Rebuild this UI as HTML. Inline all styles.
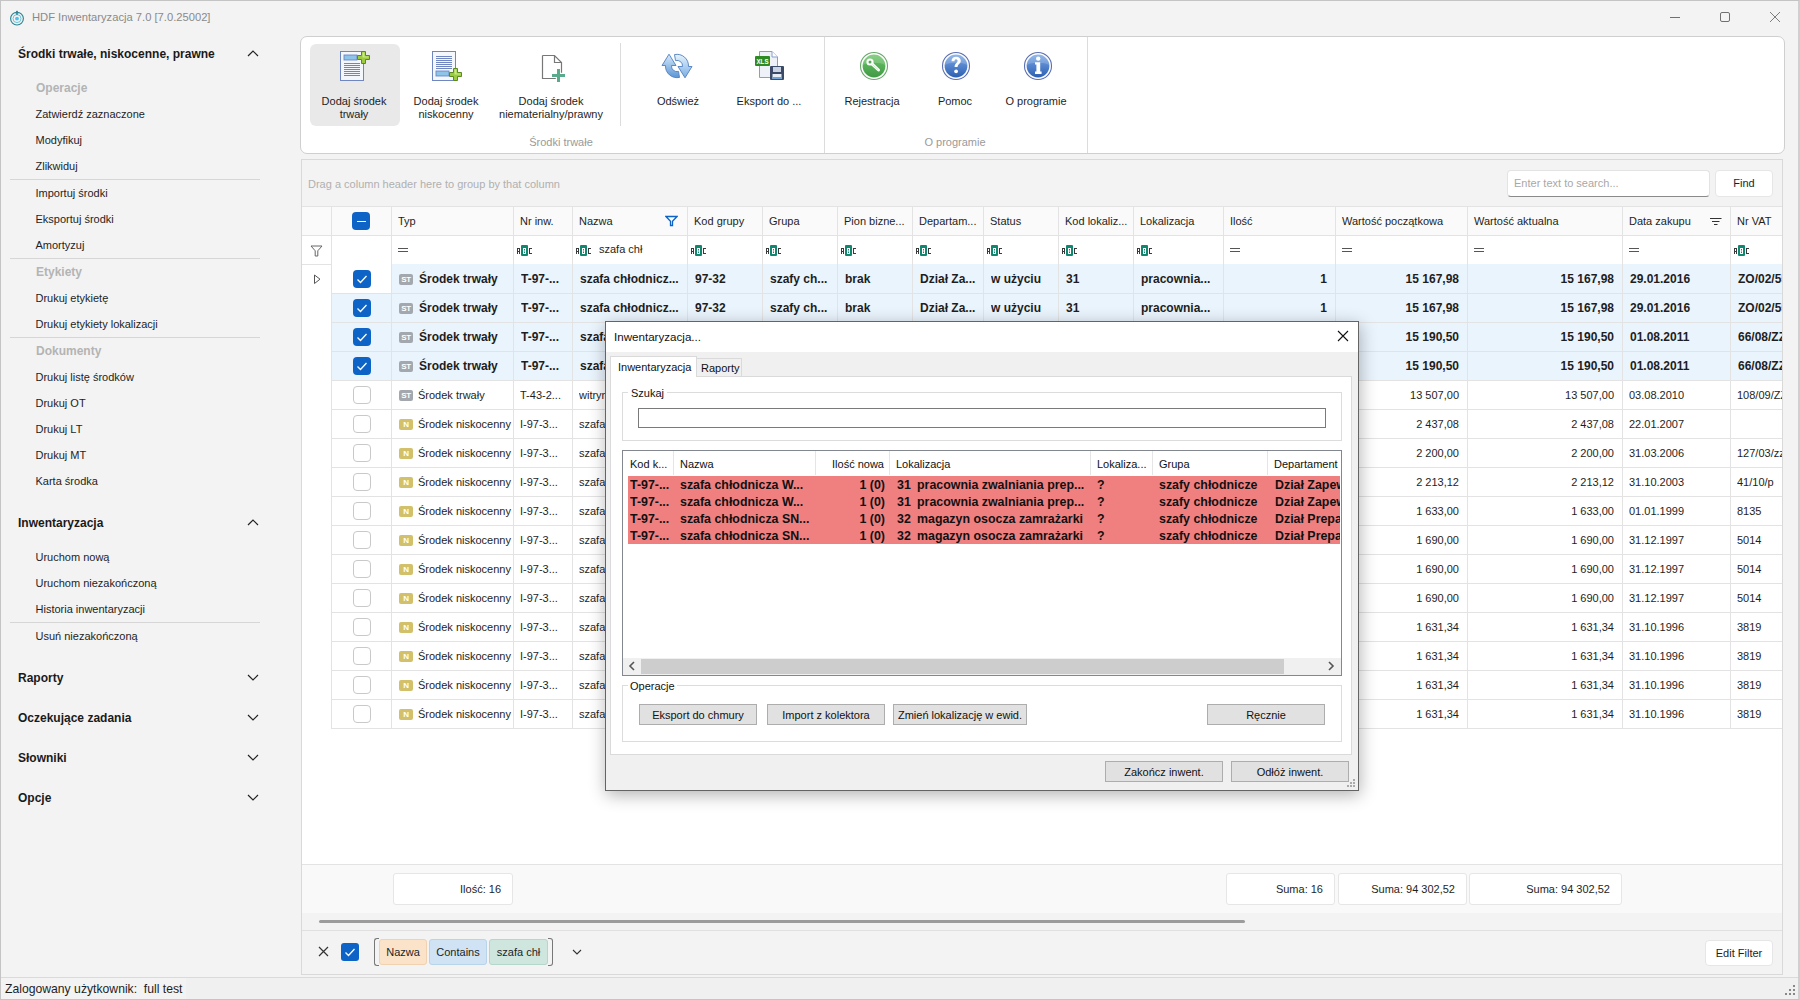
<!DOCTYPE html><html><head><meta charset='utf-8'><style>
*{box-sizing:border-box;margin:0;padding:0}
html,body{width:1800px;height:1000px;overflow:hidden;background:#f3f3f3;font-family:"Liberation Sans",sans-serif;font-size:11px;color:#1e1e1e}
.a{position:absolute}
.t{position:absolute;white-space:nowrap;line-height:14px}
.b{font-weight:bold;font-size:12px}
</style></head><body>
<div class='a' style='left:0;top:0;width:1800px;height:1000px;border:1px solid #c4c4c4;border-right:2px solid #cfcfcf'></div>
<svg class='a' style='left:9px;top:9px' width='16' height='17' viewBox='0 0 16 17'><circle cx='8' cy='9.6' r='6.4' fill='none' stroke='#2e8595' stroke-width='1.15'/><circle cx='8' cy='9.6' r='4' fill='none' stroke='#5fbfd8' stroke-width='0.9'/><circle cx='8' cy='9.6' r='1.9' fill='#4cc2ef'/><path d='M6.3 4.5L8 1.2L9.7 4.5Z' fill='#2e8595'/><rect x='7.3' y='2' width='1.4' height='4' fill='#2e8595'/></svg>
<div class='t' style='left:32px;top:10px;color:#8a8a8a;font-size:11.2px'>HDF Inwentaryzacja 7.0 [7.0.25002]</div>
<div class='a' style='left:1670px;top:17px;width:10px;height:1px;background:#707070'></div>
<div class='a' style='left:1720px;top:12px;width:10px;height:10px;border:1px solid #707070;border-radius:2px'></div>
<svg class='a' style='left:1769px;top:11px' width='12' height='12'><path d='M1 1L11 11M11 1L1 11' stroke='#707070' stroke-width='0.9'/></svg>
<div class='t b' style='left:18px;top:47px;color:#1a1a1a'>Środki trwałe, niskocenne, prawne</div>
<svg class='a' style='left:247px;top:50px' width='12' height='8'><path d='M1 6L6 1L11 6' fill='none' stroke='#222' stroke-width='1.2'/></svg>
<div class='t b' style='left:36px;top:81px;color:#b4b4b4'>Operacje</div>
<div class='t' style='left:35.5px;top:107px;color:#1e1e1e'>Zatwierdź zaznaczone</div>
<div class='t' style='left:35.5px;top:133px;color:#1e1e1e'>Modyfikuj</div>
<div class='t' style='left:35.5px;top:159px;color:#1e1e1e'>Zlikwiduj</div>
<div class='a' style='left:10px;top:179px;width:250px;height:1px;background:#d6d6d6'></div>
<div class='t' style='left:35.5px;top:186px;color:#1e1e1e'>Importuj środki</div>
<div class='t' style='left:35.5px;top:212px;color:#1e1e1e'>Eksportuj środki</div>
<div class='t' style='left:35.5px;top:238px;color:#1e1e1e'>Amortyzuj</div>
<div class='a' style='left:10px;top:258px;width:250px;height:1px;background:#d6d6d6'></div>
<div class='t b' style='left:36px;top:265px;color:#b4b4b4'>Etykiety</div>
<div class='t' style='left:35.5px;top:291px;color:#1e1e1e'>Drukuj etykietę</div>
<div class='t' style='left:35.5px;top:317px;color:#1e1e1e'>Drukuj etykiety lokalizacji</div>
<div class='a' style='left:10px;top:337px;width:250px;height:1px;background:#d6d6d6'></div>
<div class='t b' style='left:36px;top:344px;color:#b4b4b4'>Dokumenty</div>
<div class='t' style='left:35.5px;top:370px;color:#1e1e1e'>Drukuj listę środków</div>
<div class='t' style='left:35.5px;top:396px;color:#1e1e1e'>Drukuj OT</div>
<div class='t' style='left:35.5px;top:422px;color:#1e1e1e'>Drukuj LT</div>
<div class='t' style='left:35.5px;top:448px;color:#1e1e1e'>Drukuj MT</div>
<div class='t' style='left:35.5px;top:474px;color:#1e1e1e'>Karta środka</div>
<div class='t b' style='left:18px;top:516px;color:#1a1a1a'>Inwentaryzacja</div>
<svg class='a' style='left:247px;top:519px' width='12' height='8'><path d='M1 6L6 1L11 6' fill='none' stroke='#222' stroke-width='1.2'/></svg>
<div class='t' style='left:35.5px;top:550px;color:#1e1e1e'>Uruchom nową</div>
<div class='t' style='left:35.5px;top:576px;color:#1e1e1e'>Uruchom niezakończoną</div>
<div class='t' style='left:35.5px;top:602px;color:#1e1e1e'>Historia inwentaryzacji</div>
<div class='a' style='left:10px;top:622px;width:250px;height:1px;background:#d6d6d6'></div>
<div class='t' style='left:35.5px;top:629px;color:#1e1e1e'>Usuń niezakończoną</div>
<div class='t b' style='left:18px;top:671px;color:#1a1a1a'>Raporty</div>
<svg class='a' style='left:247px;top:674px' width='12' height='8'><path d='M1 1L6 6L11 1' fill='none' stroke='#222' stroke-width='1.2'/></svg>
<div class='t b' style='left:18px;top:711px;color:#1a1a1a'>Oczekujące zadania</div>
<svg class='a' style='left:247px;top:714px' width='12' height='8'><path d='M1 1L6 6L11 1' fill='none' stroke='#222' stroke-width='1.2'/></svg>
<div class='t b' style='left:18px;top:751px;color:#1a1a1a'>Słowniki</div>
<svg class='a' style='left:247px;top:754px' width='12' height='8'><path d='M1 1L6 6L11 1' fill='none' stroke='#222' stroke-width='1.2'/></svg>
<div class='t b' style='left:18px;top:791px;color:#1a1a1a'>Opcje</div>
<svg class='a' style='left:247px;top:794px' width='12' height='8'><path d='M1 1L6 6L11 1' fill='none' stroke='#222' stroke-width='1.2'/></svg>
<div class='a' style='left:300px;top:36px;width:1485px;height:118px;background:#fff;border:1px solid #cfcfcf;border-radius:7px'></div>
<div class='a' style='left:310px;top:44px;width:90px;height:82px;background:#e9e9e9;border-radius:6px'></div>
<div class='a' style='left:620px;top:43px;width:1px;height:83px;background:#dcdcdc'></div>
<div class='a' style='left:824px;top:37px;width:1px;height:116px;background:#dcdcdc'></div>
<div class='a' style='left:1087px;top:37px;width:1px;height:116px;background:#dcdcdc'></div>
<div class='t' style='left:254px;width:200px;text-align:center;top:94px'>Dodaj środek</div>
<div class='t' style='left:254px;width:200px;text-align:center;top:107px'>trwały</div>
<div class='t' style='left:346px;width:200px;text-align:center;top:94px'>Dodaj środek</div>
<div class='t' style='left:346px;width:200px;text-align:center;top:107px'>niskocenny</div>
<div class='t' style='left:451px;width:200px;text-align:center;top:94px'>Dodaj środek</div>
<div class='t' style='left:451px;width:200px;text-align:center;top:107px'>niematerialny/prawny</div>
<div class='t' style='left:578px;width:200px;text-align:center;top:94px'>Odśwież</div>
<div class='t' style='left:669px;width:200px;text-align:center;top:94px'>Eksport do ...</div>
<div class='t' style='left:772px;width:200px;text-align:center;top:94px'>Rejestracja</div>
<div class='t' style='left:855px;width:200px;text-align:center;top:94px'>Pomoc</div>
<div class='t' style='left:936px;width:200px;text-align:center;top:94px'>O programie</div>
<div class='t' style='left:461px;width:200px;text-align:center;top:135px;color:#9a9a9a'>Środki trwałe</div>
<div class='t' style='left:855px;width:200px;text-align:center;top:135px;color:#9a9a9a'>O programie</div>
<svg class='a' style='left:340px;top:51px' width='24' height='31' viewBox='0 0 24 31'><rect x='0.5' y='0.5' width='23' height='29' fill='#f4f7fc' stroke='#6f86c0'/><rect x='4' y='4' width='13' height='5' fill='#8ec3ea' stroke='#5f7fc0' stroke-width='0.8'/><rect x='4' y='12' width='16' height='1' fill='#6f86c0'/><rect x='4' y='14' width='16' height='1' fill='#6f86c0'/><rect x='4' y='16' width='16' height='1' fill='#6f86c0'/><rect x='4' y='18' width='16' height='1' fill='#6f86c0'/><rect x='4' y='20' width='16' height='1' fill='#6f86c0'/><rect x='4' y='22' width='16' height='1' fill='#6f86c0'/><rect x='4' y='24' width='16' height='1' fill='#6f86c0'/></svg>
<svg class='a' style='left:357px;top:51px' width='14' height='14' viewBox='0 0 14 14'><path d='M4.5 0.5H8.5V4.5H12.5V8.5H8.5V12.5H4.5V8.5H0.5V4.5H4.5Z' fill='#9ccb3f' stroke='#5b8a1e' stroke-width='1'/><path d='M5.5 1.5H7.5V5.5H11.5V6.5H5.5Z' fill='#c9e98a'/></svg>
<svg class='a' style='left:432px;top:51px' width='24' height='31' viewBox='0 0 24 31'><rect x='0.5' y='0.5' width='23' height='29' fill='#f4f7fc' stroke='#6f86c0'/><rect x='4' y='5.0' width='16' height='1' fill='#6f86c0'/><rect x='4' y='7.0' width='16' height='1' fill='#6f86c0'/><rect x='4' y='9.0' width='16' height='1' fill='#6f86c0'/><rect x='4' y='11.0' width='16' height='1' fill='#6f86c0'/><rect x='4' y='13.0' width='16' height='1' fill='#6f86c0'/><rect x='4' y='15.0' width='16' height='1' fill='#6f86c0'/><rect x='4' y='17.0' width='16' height='1' fill='#6f86c0'/><rect x='4' y='20' width='13' height='5' fill='#8ec3ea' stroke='#5f7fc0' stroke-width='0.8'/></svg>
<svg class='a' style='left:449px;top:68px' width='14' height='14' viewBox='0 0 14 14'><path d='M4.5 0.5H8.5V4.5H12.5V8.5H8.5V12.5H4.5V8.5H0.5V4.5H4.5Z' fill='#9ccb3f' stroke='#5b8a1e' stroke-width='1'/><path d='M5.5 1.5H7.5V5.5H11.5V6.5H5.5Z' fill='#c9e98a'/></svg>
<svg class='a' style='left:541px;top:54px' width='26' height='30' viewBox='0 0 26 30'><path d='M1.5 1.5H13.5L20.5 8.5V18.8M14.8 24.5H1.5V1.5M13.5 1.5V8.5H20.5' fill='none' stroke='#777' stroke-width='1.2'/><path d='M16 15H19V20H24V23H19V28H16V23H11V20H16Z' fill='#5aaa8c'/></svg>
<svg class='a' style='left:661px;top:53px' width='34' height='27' viewBox='0 0 34 27'><defs><linearGradient id='rg' x1='0' y1='0' x2='0' y2='1'><stop offset='0' stop-color='#d8ecfb'/><stop offset='1' stop-color='#5b95d6'/></linearGradient><linearGradient id='rg2' x1='0' y1='0' x2='0' y2='1'><stop offset='0' stop-color='#e6f3fd'/><stop offset='1' stop-color='#7aaee3'/></linearGradient></defs><path d='M18.5 24.4A11.5 11.5 0 0 1 4.5 12.5H1L8 1.2L15 12.5H10.5A5.5 5.5 0 0 0 17.5 18.4Z' fill='url(#rg)' stroke='#4f7fc0' stroke-width='0.9' stroke-linejoin='round'/><path d='M13.5 1.6A11.5 11.5 0 0 1 27.5 13.5H31L24 24.8L17 13.5H21.5A5.5 5.5 0 0 0 14.5 7.6Z' fill='url(#rg2)' stroke='#4f7fc0' stroke-width='0.9' stroke-linejoin='round'/></svg>
<svg class='a' style='left:754px;top:50px' width='32' height='31' viewBox='0 0 32 31'><path d='M5.5 1.5H18L23.5 7V27.5H5.5Z' fill='#eef2f8' stroke='#8a9ccc'/><path d='M18 1.5V7H23.5' fill='#fff' stroke='#8a9ccc'/><rect x='1' y='6' width='15' height='10' rx='1' fill='#2e8b22'/><text x='8.5' y='14' font-family='Liberation Sans' font-weight='bold' font-size='7.5' textLength='12' lengthAdjust='spacingAndGlyphs' fill='#fff' text-anchor='middle'>XLS</text><rect x='16' y='16' width='14' height='14' rx='1' fill='#3b4a66'/><rect x='19' y='17' width='8' height='5' fill='#c9d3e2'/><rect x='18.5' y='24' width='9' height='5' fill='#e8eef6'/><rect x='18.5' y='27' width='9' height='2' fill='#6fa3d8'/></svg>
<svg class='a' style='left:859px;top:51px' width='30' height='30' viewBox='0 0 30 30'><defs><linearGradient id='g874' x1='0' y1='0' x2='0' y2='1'><stop offset='0' stop-color='#6cc56a'/><stop offset='1' stop-color='#3f9a44'/></linearGradient></defs><circle cx='15' cy='15' r='13.5' fill='#fff' stroke='#6aa86c' stroke-width='1.1'/><circle cx='15' cy='15' r='11.4' fill='url(#g874)'/><path d='M4 14A11 11 0 0 1 26 14C22 11 8 11 4 14Z' fill='#fff' opacity='0.18'/><circle cx='11' cy='11' r='3.6' fill='#fff'/><circle cx='11' cy='11' r='1.5' fill='#52a852'/><path d='M13.2 13.2L19.5 19' stroke='#fff' stroke-width='3' stroke-linecap='round'/><path d='M13.8 13.8L19 18.6' stroke='#cfe8cf' stroke-width='1' stroke-linecap='round'/></svg>
<svg class='a' style='left:941px;top:51px' width='30' height='30' viewBox='0 0 30 30'><defs><linearGradient id='g956' x1='0' y1='0' x2='0' y2='1'><stop offset='0' stop-color='#7aa8e6'/><stop offset='1' stop-color='#2d5fb2'/></linearGradient></defs><circle cx='15' cy='15' r='13.5' fill='#fff' stroke='#5b6fb0' stroke-width='1.1'/><circle cx='15' cy='15' r='11.4' fill='url(#g956)'/><path d='M4 14A11 11 0 0 1 26 14C22 11 8 11 4 14Z' fill='#fff' opacity='0.18'/><path d='M10.5 10.2C10.5 7.2 12.6 5.8 15.2 5.8C18 5.8 19.8 7.5 19.8 9.8C19.8 12.9 16.6 13.2 16.6 16H13.6C13.6 12.2 16.6 11.8 16.6 10C16.6 9 16 8.3 15 8.3C14 8.3 13.5 9 13.5 10.2Z' fill='#fff'/><circle cx='15.1' cy='20.3' r='1.9' fill='#fff'/></svg>
<svg class='a' style='left:1023px;top:51px' width='30' height='30' viewBox='0 0 30 30'><defs><linearGradient id='g1038' x1='0' y1='0' x2='0' y2='1'><stop offset='0' stop-color='#7aa8e6'/><stop offset='1' stop-color='#2d5fb2'/></linearGradient></defs><circle cx='15' cy='15' r='13.5' fill='#fff' stroke='#5b6fb0' stroke-width='1.1'/><circle cx='15' cy='15' r='11.4' fill='url(#g1038)'/><path d='M4 14A11 11 0 0 1 26 14C22 11 8 11 4 14Z' fill='#fff' opacity='0.18'/><circle cx='15.2' cy='7.6' r='2.2' fill='#fff'/><path d='M12 11.2H17.2V20.5H18.6V23H12V20.5H13.4V13.6H12Z' fill='#fff'/></svg>
<div class='a' style='left:301px;top:159px;width:1482px;height:816px;background:#fff;border:1px solid #d9d9d9'></div>
<div class='a' style='left:302px;top:160px;width:1480px;height:46px;background:#f3f3f3'></div>
<div class='t' style='left:308px;top:177px;color:#b0b0b0'>Drag a column header here to group by that column</div>
<div class='a' style='left:1507px;top:170px;width:203px;height:27px;background:#fff;border:1px solid #e3e3e3;border-bottom:1px solid #8a8a8a;border-radius:4px'></div>
<div class='t' style='left:1514px;top:176px;color:#a8a8a8'>Enter text to search...</div>
<div class='a' style='left:1715px;top:170px;width:58px;height:27px;background:#fff;border:1px solid #e6e6e6;border-radius:4px'></div>
<div class='t' style='left:1715px;width:58px;text-align:center;top:176px;color:#1e1e1e'>Find</div>
<div class='a' style='left:302px;top:206px;width:1480px;height:30px;background:#fafafa;border-top:1px solid #e3e3e3;border-bottom:1px solid #e3e3e3'></div>
<div class='a' style='left:302px;top:236px;width:1480px;height:29px;background:#fff;border-bottom:1px solid #e3e3e3'></div>
<div class='a' style='left:331px;top:206px;width:1px;height:58px;background:#e3e3e3'></div>
<div class='a' style='left:391px;top:206px;width:1px;height:58px;background:#e3e3e3'></div>
<div class='a' style='left:513px;top:206px;width:1px;height:58px;background:#e3e3e3'></div>
<div class='a' style='left:572px;top:206px;width:1px;height:58px;background:#e3e3e3'></div>
<div class='a' style='left:687px;top:206px;width:1px;height:58px;background:#e3e3e3'></div>
<div class='a' style='left:762px;top:206px;width:1px;height:58px;background:#e3e3e3'></div>
<div class='a' style='left:837px;top:206px;width:1px;height:58px;background:#e3e3e3'></div>
<div class='a' style='left:912px;top:206px;width:1px;height:58px;background:#e3e3e3'></div>
<div class='a' style='left:983px;top:206px;width:1px;height:58px;background:#e3e3e3'></div>
<div class='a' style='left:1058px;top:206px;width:1px;height:58px;background:#e3e3e3'></div>
<div class='a' style='left:1133px;top:206px;width:1px;height:58px;background:#e3e3e3'></div>
<div class='a' style='left:1223px;top:206px;width:1px;height:58px;background:#e3e3e3'></div>
<div class='a' style='left:1335px;top:206px;width:1px;height:58px;background:#e3e3e3'></div>
<div class='a' style='left:1467px;top:206px;width:1px;height:58px;background:#e3e3e3'></div>
<div class='a' style='left:1622px;top:206px;width:1px;height:58px;background:#e3e3e3'></div>
<div class='a' style='left:1730px;top:206px;width:1px;height:58px;background:#e3e3e3'></div>
<div class='t' style='left:398px;top:214px;color:#1e1e1e'>Typ</div>
<div class='a' style='left:398px;top:248px;width:10px;height:4px;border-top:1px solid #555;border-bottom:1px solid #555'></div>
<div class='t' style='left:520px;top:214px;color:#1e1e1e'>Nr inw.</div>
<svg class='a' style='left:516px;top:244px' width='17' height='13' viewBox='0 0 17 13'><path d='M1 4H4V10H3V8H2V10H1ZM2 5V7H3V5Z' fill='#3a3a3a' fill-rule='evenodd'/><rect x='5' y='1' width='7' height='11' rx='1' fill='#12876f'/><path d='M7 4H10V10H7ZM8 5V6.5H9V5ZM8 7.5V9H9V7.5Z' fill='#fff' fill-rule='evenodd'/><path d='M13 4H16V5H14V9H16V10H13Z' fill='#3a3a3a'/></svg>
<div class='t' style='left:579px;top:214px;color:#1e1e1e'>Nazwa</div>
<svg class='a' style='left:575px;top:244px' width='17' height='13' viewBox='0 0 17 13'><path d='M1 4H4V10H3V8H2V10H1ZM2 5V7H3V5Z' fill='#3a3a3a' fill-rule='evenodd'/><rect x='5' y='1' width='7' height='11' rx='1' fill='#12876f'/><path d='M7 4H10V10H7ZM8 5V6.5H9V5ZM8 7.5V9H9V7.5Z' fill='#fff' fill-rule='evenodd'/><path d='M13 4H16V5H14V9H16V10H13Z' fill='#3a3a3a'/></svg>
<div class='t' style='left:694px;top:214px;color:#1e1e1e'>Kod grupy</div>
<svg class='a' style='left:690px;top:244px' width='17' height='13' viewBox='0 0 17 13'><path d='M1 4H4V10H3V8H2V10H1ZM2 5V7H3V5Z' fill='#3a3a3a' fill-rule='evenodd'/><rect x='5' y='1' width='7' height='11' rx='1' fill='#12876f'/><path d='M7 4H10V10H7ZM8 5V6.5H9V5ZM8 7.5V9H9V7.5Z' fill='#fff' fill-rule='evenodd'/><path d='M13 4H16V5H14V9H16V10H13Z' fill='#3a3a3a'/></svg>
<div class='t' style='left:769px;top:214px;color:#1e1e1e'>Grupa</div>
<svg class='a' style='left:765px;top:244px' width='17' height='13' viewBox='0 0 17 13'><path d='M1 4H4V10H3V8H2V10H1ZM2 5V7H3V5Z' fill='#3a3a3a' fill-rule='evenodd'/><rect x='5' y='1' width='7' height='11' rx='1' fill='#12876f'/><path d='M7 4H10V10H7ZM8 5V6.5H9V5ZM8 7.5V9H9V7.5Z' fill='#fff' fill-rule='evenodd'/><path d='M13 4H16V5H14V9H16V10H13Z' fill='#3a3a3a'/></svg>
<div class='t' style='left:844px;top:214px;color:#1e1e1e'>Pion bizne...</div>
<svg class='a' style='left:840px;top:244px' width='17' height='13' viewBox='0 0 17 13'><path d='M1 4H4V10H3V8H2V10H1ZM2 5V7H3V5Z' fill='#3a3a3a' fill-rule='evenodd'/><rect x='5' y='1' width='7' height='11' rx='1' fill='#12876f'/><path d='M7 4H10V10H7ZM8 5V6.5H9V5ZM8 7.5V9H9V7.5Z' fill='#fff' fill-rule='evenodd'/><path d='M13 4H16V5H14V9H16V10H13Z' fill='#3a3a3a'/></svg>
<div class='t' style='left:919px;top:214px;color:#1e1e1e'>Departam...</div>
<svg class='a' style='left:915px;top:244px' width='17' height='13' viewBox='0 0 17 13'><path d='M1 4H4V10H3V8H2V10H1ZM2 5V7H3V5Z' fill='#3a3a3a' fill-rule='evenodd'/><rect x='5' y='1' width='7' height='11' rx='1' fill='#12876f'/><path d='M7 4H10V10H7ZM8 5V6.5H9V5ZM8 7.5V9H9V7.5Z' fill='#fff' fill-rule='evenodd'/><path d='M13 4H16V5H14V9H16V10H13Z' fill='#3a3a3a'/></svg>
<div class='t' style='left:990px;top:214px;color:#1e1e1e'>Status</div>
<svg class='a' style='left:986px;top:244px' width='17' height='13' viewBox='0 0 17 13'><path d='M1 4H4V10H3V8H2V10H1ZM2 5V7H3V5Z' fill='#3a3a3a' fill-rule='evenodd'/><rect x='5' y='1' width='7' height='11' rx='1' fill='#12876f'/><path d='M7 4H10V10H7ZM8 5V6.5H9V5ZM8 7.5V9H9V7.5Z' fill='#fff' fill-rule='evenodd'/><path d='M13 4H16V5H14V9H16V10H13Z' fill='#3a3a3a'/></svg>
<div class='t' style='left:1065px;top:214px;color:#1e1e1e'>Kod lokaliz...</div>
<svg class='a' style='left:1061px;top:244px' width='17' height='13' viewBox='0 0 17 13'><path d='M1 4H4V10H3V8H2V10H1ZM2 5V7H3V5Z' fill='#3a3a3a' fill-rule='evenodd'/><rect x='5' y='1' width='7' height='11' rx='1' fill='#12876f'/><path d='M7 4H10V10H7ZM8 5V6.5H9V5ZM8 7.5V9H9V7.5Z' fill='#fff' fill-rule='evenodd'/><path d='M13 4H16V5H14V9H16V10H13Z' fill='#3a3a3a'/></svg>
<div class='t' style='left:1140px;top:214px;color:#1e1e1e'>Lokalizacja</div>
<svg class='a' style='left:1136px;top:244px' width='17' height='13' viewBox='0 0 17 13'><path d='M1 4H4V10H3V8H2V10H1ZM2 5V7H3V5Z' fill='#3a3a3a' fill-rule='evenodd'/><rect x='5' y='1' width='7' height='11' rx='1' fill='#12876f'/><path d='M7 4H10V10H7ZM8 5V6.5H9V5ZM8 7.5V9H9V7.5Z' fill='#fff' fill-rule='evenodd'/><path d='M13 4H16V5H14V9H16V10H13Z' fill='#3a3a3a'/></svg>
<div class='t' style='left:1230px;top:214px;color:#1e1e1e'>Ilość</div>
<div class='a' style='left:1230px;top:248px;width:10px;height:4px;border-top:1px solid #555;border-bottom:1px solid #555'></div>
<div class='t' style='left:1342px;top:214px;color:#1e1e1e'>Wartość początkowa</div>
<div class='a' style='left:1342px;top:248px;width:10px;height:4px;border-top:1px solid #555;border-bottom:1px solid #555'></div>
<div class='t' style='left:1474px;top:214px;color:#1e1e1e'>Wartość aktualna</div>
<div class='a' style='left:1474px;top:248px;width:10px;height:4px;border-top:1px solid #555;border-bottom:1px solid #555'></div>
<div class='t' style='left:1629px;top:214px;color:#1e1e1e'>Data zakupu</div>
<div class='a' style='left:1629px;top:248px;width:10px;height:4px;border-top:1px solid #555;border-bottom:1px solid #555'></div>
<div class='t' style='left:1737px;top:214px;color:#1e1e1e'>Nr VAT</div>
<svg class='a' style='left:1733px;top:244px' width='17' height='13' viewBox='0 0 17 13'><path d='M1 4H4V10H3V8H2V10H1ZM2 5V7H3V5Z' fill='#3a3a3a' fill-rule='evenodd'/><rect x='5' y='1' width='7' height='11' rx='1' fill='#12876f'/><path d='M7 4H10V10H7ZM8 5V6.5H9V5ZM8 7.5V9H9V7.5Z' fill='#fff' fill-rule='evenodd'/><path d='M13 4H16V5H14V9H16V10H13Z' fill='#3a3a3a'/></svg>
<div class='t' style='left:599px;top:242px'>szafa chł</div>
<div class='a' style='left:352px;top:212px;width:18px;height:18px;background:#0d64c6;border-radius:4px'></div>
<div class='a' style='left:357px;top:220.5px;width:8.5px;height:1.5px;background:#fff'></div>
<svg class='a' style='left:665px;top:215px' width='13' height='13' viewBox='0 0 13 13'><path d='M1 1.5H12L7.5 6.3V10.5H5.5V6.3Z' fill='none' stroke='#0b63c8' stroke-width='1.3'/></svg>
<svg class='a' style='left:1710px;top:217px' width='13' height='10'><path d='M0 1.5H11.5M2 4.5H9.5M4 7.5H7.5' stroke='#333' stroke-width='1.1'/></svg>
<svg class='a' style='left:310px;top:245px' width='13' height='12' viewBox='0 0 13 12'><path d='M1 1H12L7.8 5.8V11H5.2V5.8Z' fill='none' stroke='#666' stroke-width='1'/></svg>
<div class='a' style='left:391px;top:264px;width:1391px;height:29px;background:#eaf4fd'></div>
<div class='a' style='left:331px;top:264px;width:60px;height:29px;background:#fff'></div>
<div class='a' style='left:391px;top:293px;width:1391px;height:29px;background:#eaf4fd'></div>
<div class='a' style='left:331px;top:293px;width:60px;height:29px;background:#eaf4fd'></div>
<div class='a' style='left:391px;top:322px;width:1391px;height:29px;background:#eaf4fd'></div>
<div class='a' style='left:331px;top:322px;width:60px;height:29px;background:#eaf4fd'></div>
<div class='a' style='left:391px;top:351px;width:1391px;height:29px;background:#eaf4fd'></div>
<div class='a' style='left:331px;top:351px;width:60px;height:29px;background:#eaf4fd'></div>
<div class='a' style='left:391px;top:380px;width:1391px;height:29px;background:#fff'></div>
<div class='a' style='left:331px;top:380px;width:60px;height:29px;background:#fff'></div>
<div class='a' style='left:391px;top:409px;width:1391px;height:29px;background:#fff'></div>
<div class='a' style='left:331px;top:409px;width:60px;height:29px;background:#fff'></div>
<div class='a' style='left:391px;top:438px;width:1391px;height:29px;background:#fff'></div>
<div class='a' style='left:331px;top:438px;width:60px;height:29px;background:#fff'></div>
<div class='a' style='left:391px;top:467px;width:1391px;height:29px;background:#fff'></div>
<div class='a' style='left:331px;top:467px;width:60px;height:29px;background:#fff'></div>
<div class='a' style='left:391px;top:496px;width:1391px;height:29px;background:#fff'></div>
<div class='a' style='left:331px;top:496px;width:60px;height:29px;background:#fff'></div>
<div class='a' style='left:391px;top:525px;width:1391px;height:29px;background:#fff'></div>
<div class='a' style='left:331px;top:525px;width:60px;height:29px;background:#fff'></div>
<div class='a' style='left:391px;top:554px;width:1391px;height:29px;background:#fff'></div>
<div class='a' style='left:331px;top:554px;width:60px;height:29px;background:#fff'></div>
<div class='a' style='left:391px;top:583px;width:1391px;height:29px;background:#fff'></div>
<div class='a' style='left:331px;top:583px;width:60px;height:29px;background:#fff'></div>
<div class='a' style='left:391px;top:612px;width:1391px;height:29px;background:#fff'></div>
<div class='a' style='left:331px;top:612px;width:60px;height:29px;background:#fff'></div>
<div class='a' style='left:391px;top:641px;width:1391px;height:29px;background:#fff'></div>
<div class='a' style='left:331px;top:641px;width:60px;height:29px;background:#fff'></div>
<div class='a' style='left:391px;top:670px;width:1391px;height:29px;background:#fff'></div>
<div class='a' style='left:331px;top:670px;width:60px;height:29px;background:#fff'></div>
<div class='a' style='left:391px;top:699px;width:1391px;height:29px;background:#fff'></div>
<div class='a' style='left:331px;top:699px;width:60px;height:29px;background:#fff'></div>
<div class='a' style='left:331px;top:293px;width:1451px;height:1px;background:#e3e3e3'></div>
<div class='a' style='left:331px;top:322px;width:1451px;height:1px;background:#e3e3e3'></div>
<div class='a' style='left:331px;top:351px;width:1451px;height:1px;background:#e3e3e3'></div>
<div class='a' style='left:331px;top:380px;width:1451px;height:1px;background:#e3e3e3'></div>
<div class='a' style='left:331px;top:409px;width:1451px;height:1px;background:#e3e3e3'></div>
<div class='a' style='left:331px;top:438px;width:1451px;height:1px;background:#e3e3e3'></div>
<div class='a' style='left:331px;top:467px;width:1451px;height:1px;background:#e3e3e3'></div>
<div class='a' style='left:331px;top:496px;width:1451px;height:1px;background:#e3e3e3'></div>
<div class='a' style='left:331px;top:525px;width:1451px;height:1px;background:#e3e3e3'></div>
<div class='a' style='left:331px;top:554px;width:1451px;height:1px;background:#e3e3e3'></div>
<div class='a' style='left:331px;top:583px;width:1451px;height:1px;background:#e3e3e3'></div>
<div class='a' style='left:331px;top:612px;width:1451px;height:1px;background:#e3e3e3'></div>
<div class='a' style='left:331px;top:641px;width:1451px;height:1px;background:#e3e3e3'></div>
<div class='a' style='left:331px;top:670px;width:1451px;height:1px;background:#e3e3e3'></div>
<div class='a' style='left:331px;top:699px;width:1451px;height:1px;background:#e3e3e3'></div>
<div class='a' style='left:331px;top:728px;width:1451px;height:1px;background:#e3e3e3'></div>
<div class='a' style='left:331px;top:264px;width:1px;height:29px;background:#e3e3e3'></div>
<div class='a' style='left:391px;top:264px;width:1px;height:29px;background:#e3e3e3'></div>
<div class='a' style='left:513px;top:264px;width:1px;height:29px;background:#e3e3e3'></div>
<div class='a' style='left:572px;top:264px;width:1px;height:29px;background:#e3e3e3'></div>
<div class='a' style='left:687px;top:264px;width:1px;height:29px;background:#e3e3e3'></div>
<div class='a' style='left:762px;top:264px;width:1px;height:29px;background:#e3e3e3'></div>
<div class='a' style='left:837px;top:264px;width:1px;height:29px;background:#e3e3e3'></div>
<div class='a' style='left:912px;top:264px;width:1px;height:29px;background:#e3e3e3'></div>
<div class='a' style='left:983px;top:264px;width:1px;height:29px;background:#e3e3e3'></div>
<div class='a' style='left:1058px;top:264px;width:1px;height:29px;background:#e3e3e3'></div>
<div class='a' style='left:1133px;top:264px;width:1px;height:29px;background:#e3e3e3'></div>
<div class='a' style='left:1223px;top:264px;width:1px;height:29px;background:#e3e3e3'></div>
<div class='a' style='left:1335px;top:264px;width:1px;height:29px;background:#e3e3e3'></div>
<div class='a' style='left:1467px;top:264px;width:1px;height:29px;background:#e3e3e3'></div>
<div class='a' style='left:1622px;top:264px;width:1px;height:29px;background:#e3e3e3'></div>
<div class='a' style='left:1730px;top:264px;width:1px;height:29px;background:#e3e3e3'></div>
<div class='a' style='left:353px;top:270px;width:18px;height:18px;background:#0d64c6;border-radius:4px'></div>
<svg class='a' style='left:353px;top:270px' width='18' height='18'><path d='M4.5 9.5L7.5 12.5L13.5 6' fill='none' stroke='#fff' stroke-width='1.3'/></svg>
<div class='a' style='left:399px;top:274px;width:14px;height:11px;background:#a3a8ae;border-radius:2px;color:#fff;font-size:8px;font-weight:bold;line-height:11px;text-align:center;letter-spacing:-0.3px'>ST</div>
<div class='t b' style='left:419px;top:272px'>Środek trwały</div>
<div class='t b' style='left:521px;width:51px;overflow:hidden;top:272px'>T-97-...</div>
<div class='t b' style='left:580px;width:107px;overflow:hidden;top:272px'>szafa chłodnicz...</div>
<div class='t b' style='left:695px;width:67px;overflow:hidden;top:272px'>97-32</div>
<div class='t b' style='left:770px;width:67px;overflow:hidden;top:272px'>szafy ch...</div>
<div class='t b' style='left:845px;width:67px;overflow:hidden;top:272px'>brak</div>
<div class='t b' style='left:920px;width:63px;overflow:hidden;top:272px'>Dział Za...</div>
<div class='t b' style='left:991px;width:67px;overflow:hidden;top:272px'>w użyciu</div>
<div class='t b' style='left:1066px;width:67px;overflow:hidden;top:272px'>31</div>
<div class='t b' style='left:1141px;width:82px;overflow:hidden;top:272px'>pracownia...</div>
<div class='t b' style='left:1223px;width:104px;text-align:right;top:272px'>1</div>
<div class='t b' style='left:1335px;width:124px;text-align:right;top:272px'>15 167,98</div>
<div class='t b' style='left:1467px;width:147px;text-align:right;top:272px'>15 167,98</div>
<div class='t b' style='left:1630px;width:100px;overflow:hidden;top:272px'>29.01.2016</div>
<div class='t b' style='left:1738px;width:44px;overflow:hidden;top:272px'>ZO/02/5555</div>
<svg class='a' style='left:313px;top:274px' width='9' height='11'><path d='M1.5 1L7 5.2L1.5 9.5Z' fill='none' stroke='#555' stroke-width='1'/></svg>
<div class='a' style='left:331px;top:293px;width:1px;height:29px;background:#e3e3e3'></div>
<div class='a' style='left:391px;top:293px;width:1px;height:29px;background:#e3e3e3'></div>
<div class='a' style='left:513px;top:293px;width:1px;height:29px;background:#e3e3e3'></div>
<div class='a' style='left:572px;top:293px;width:1px;height:29px;background:#e3e3e3'></div>
<div class='a' style='left:687px;top:293px;width:1px;height:29px;background:#e3e3e3'></div>
<div class='a' style='left:762px;top:293px;width:1px;height:29px;background:#e3e3e3'></div>
<div class='a' style='left:837px;top:293px;width:1px;height:29px;background:#e3e3e3'></div>
<div class='a' style='left:912px;top:293px;width:1px;height:29px;background:#e3e3e3'></div>
<div class='a' style='left:983px;top:293px;width:1px;height:29px;background:#e3e3e3'></div>
<div class='a' style='left:1058px;top:293px;width:1px;height:29px;background:#e3e3e3'></div>
<div class='a' style='left:1133px;top:293px;width:1px;height:29px;background:#e3e3e3'></div>
<div class='a' style='left:1223px;top:293px;width:1px;height:29px;background:#e3e3e3'></div>
<div class='a' style='left:1335px;top:293px;width:1px;height:29px;background:#e3e3e3'></div>
<div class='a' style='left:1467px;top:293px;width:1px;height:29px;background:#e3e3e3'></div>
<div class='a' style='left:1622px;top:293px;width:1px;height:29px;background:#e3e3e3'></div>
<div class='a' style='left:1730px;top:293px;width:1px;height:29px;background:#e3e3e3'></div>
<div class='a' style='left:353px;top:299px;width:18px;height:18px;background:#0d64c6;border-radius:4px'></div>
<svg class='a' style='left:353px;top:299px' width='18' height='18'><path d='M4.5 9.5L7.5 12.5L13.5 6' fill='none' stroke='#fff' stroke-width='1.3'/></svg>
<div class='a' style='left:399px;top:303px;width:14px;height:11px;background:#a3a8ae;border-radius:2px;color:#fff;font-size:8px;font-weight:bold;line-height:11px;text-align:center;letter-spacing:-0.3px'>ST</div>
<div class='t b' style='left:419px;top:301px'>Środek trwały</div>
<div class='t b' style='left:521px;width:51px;overflow:hidden;top:301px'>T-97-...</div>
<div class='t b' style='left:580px;width:107px;overflow:hidden;top:301px'>szafa chłodnicz...</div>
<div class='t b' style='left:695px;width:67px;overflow:hidden;top:301px'>97-32</div>
<div class='t b' style='left:770px;width:67px;overflow:hidden;top:301px'>szafy ch...</div>
<div class='t b' style='left:845px;width:67px;overflow:hidden;top:301px'>brak</div>
<div class='t b' style='left:920px;width:63px;overflow:hidden;top:301px'>Dział Za...</div>
<div class='t b' style='left:991px;width:67px;overflow:hidden;top:301px'>w użyciu</div>
<div class='t b' style='left:1066px;width:67px;overflow:hidden;top:301px'>31</div>
<div class='t b' style='left:1141px;width:82px;overflow:hidden;top:301px'>pracownia...</div>
<div class='t b' style='left:1223px;width:104px;text-align:right;top:301px'>1</div>
<div class='t b' style='left:1335px;width:124px;text-align:right;top:301px'>15 167,98</div>
<div class='t b' style='left:1467px;width:147px;text-align:right;top:301px'>15 167,98</div>
<div class='t b' style='left:1630px;width:100px;overflow:hidden;top:301px'>29.01.2016</div>
<div class='t b' style='left:1738px;width:44px;overflow:hidden;top:301px'>ZO/02/5555</div>
<div class='a' style='left:331px;top:322px;width:1px;height:29px;background:#e3e3e3'></div>
<div class='a' style='left:391px;top:322px;width:1px;height:29px;background:#e3e3e3'></div>
<div class='a' style='left:513px;top:322px;width:1px;height:29px;background:#e3e3e3'></div>
<div class='a' style='left:572px;top:322px;width:1px;height:29px;background:#e3e3e3'></div>
<div class='a' style='left:687px;top:322px;width:1px;height:29px;background:#e3e3e3'></div>
<div class='a' style='left:762px;top:322px;width:1px;height:29px;background:#e3e3e3'></div>
<div class='a' style='left:837px;top:322px;width:1px;height:29px;background:#e3e3e3'></div>
<div class='a' style='left:912px;top:322px;width:1px;height:29px;background:#e3e3e3'></div>
<div class='a' style='left:983px;top:322px;width:1px;height:29px;background:#e3e3e3'></div>
<div class='a' style='left:1058px;top:322px;width:1px;height:29px;background:#e3e3e3'></div>
<div class='a' style='left:1133px;top:322px;width:1px;height:29px;background:#e3e3e3'></div>
<div class='a' style='left:1223px;top:322px;width:1px;height:29px;background:#e3e3e3'></div>
<div class='a' style='left:1335px;top:322px;width:1px;height:29px;background:#e3e3e3'></div>
<div class='a' style='left:1467px;top:322px;width:1px;height:29px;background:#e3e3e3'></div>
<div class='a' style='left:1622px;top:322px;width:1px;height:29px;background:#e3e3e3'></div>
<div class='a' style='left:1730px;top:322px;width:1px;height:29px;background:#e3e3e3'></div>
<div class='a' style='left:353px;top:328px;width:18px;height:18px;background:#0d64c6;border-radius:4px'></div>
<svg class='a' style='left:353px;top:328px' width='18' height='18'><path d='M4.5 9.5L7.5 12.5L13.5 6' fill='none' stroke='#fff' stroke-width='1.3'/></svg>
<div class='a' style='left:399px;top:332px;width:14px;height:11px;background:#a3a8ae;border-radius:2px;color:#fff;font-size:8px;font-weight:bold;line-height:11px;text-align:center;letter-spacing:-0.3px'>ST</div>
<div class='t b' style='left:419px;top:330px'>Środek trwały</div>
<div class='t b' style='left:521px;width:51px;overflow:hidden;top:330px'>T-97-...</div>
<div class='t b' style='left:580px;width:107px;overflow:hidden;top:330px'>szafa chłodnicz...</div>
<div class='t b' style='left:695px;width:67px;overflow:hidden;top:330px'>97-32</div>
<div class='t b' style='left:770px;width:67px;overflow:hidden;top:330px'>szafy ch...</div>
<div class='t b' style='left:845px;width:67px;overflow:hidden;top:330px'>brak</div>
<div class='t b' style='left:920px;width:63px;overflow:hidden;top:330px'>Dział Za...</div>
<div class='t b' style='left:991px;width:67px;overflow:hidden;top:330px'>w użyciu</div>
<div class='t b' style='left:1066px;width:67px;overflow:hidden;top:330px'>31</div>
<div class='t b' style='left:1141px;width:82px;overflow:hidden;top:330px'>pracownia...</div>
<div class='t b' style='left:1223px;width:104px;text-align:right;top:330px'>1</div>
<div class='t b' style='left:1335px;width:124px;text-align:right;top:330px'>15 190,50</div>
<div class='t b' style='left:1467px;width:147px;text-align:right;top:330px'>15 190,50</div>
<div class='t b' style='left:1630px;width:100px;overflow:hidden;top:330px'>01.08.2011</div>
<div class='t b' style='left:1738px;width:44px;overflow:hidden;top:330px'>66/08/ZZZ</div>
<div class='a' style='left:331px;top:351px;width:1px;height:29px;background:#e3e3e3'></div>
<div class='a' style='left:391px;top:351px;width:1px;height:29px;background:#e3e3e3'></div>
<div class='a' style='left:513px;top:351px;width:1px;height:29px;background:#e3e3e3'></div>
<div class='a' style='left:572px;top:351px;width:1px;height:29px;background:#e3e3e3'></div>
<div class='a' style='left:687px;top:351px;width:1px;height:29px;background:#e3e3e3'></div>
<div class='a' style='left:762px;top:351px;width:1px;height:29px;background:#e3e3e3'></div>
<div class='a' style='left:837px;top:351px;width:1px;height:29px;background:#e3e3e3'></div>
<div class='a' style='left:912px;top:351px;width:1px;height:29px;background:#e3e3e3'></div>
<div class='a' style='left:983px;top:351px;width:1px;height:29px;background:#e3e3e3'></div>
<div class='a' style='left:1058px;top:351px;width:1px;height:29px;background:#e3e3e3'></div>
<div class='a' style='left:1133px;top:351px;width:1px;height:29px;background:#e3e3e3'></div>
<div class='a' style='left:1223px;top:351px;width:1px;height:29px;background:#e3e3e3'></div>
<div class='a' style='left:1335px;top:351px;width:1px;height:29px;background:#e3e3e3'></div>
<div class='a' style='left:1467px;top:351px;width:1px;height:29px;background:#e3e3e3'></div>
<div class='a' style='left:1622px;top:351px;width:1px;height:29px;background:#e3e3e3'></div>
<div class='a' style='left:1730px;top:351px;width:1px;height:29px;background:#e3e3e3'></div>
<div class='a' style='left:353px;top:357px;width:18px;height:18px;background:#0d64c6;border-radius:4px'></div>
<svg class='a' style='left:353px;top:357px' width='18' height='18'><path d='M4.5 9.5L7.5 12.5L13.5 6' fill='none' stroke='#fff' stroke-width='1.3'/></svg>
<div class='a' style='left:399px;top:361px;width:14px;height:11px;background:#a3a8ae;border-radius:2px;color:#fff;font-size:8px;font-weight:bold;line-height:11px;text-align:center;letter-spacing:-0.3px'>ST</div>
<div class='t b' style='left:419px;top:359px'>Środek trwały</div>
<div class='t b' style='left:521px;width:51px;overflow:hidden;top:359px'>T-97-...</div>
<div class='t b' style='left:580px;width:107px;overflow:hidden;top:359px'>szafa chłodnicz...</div>
<div class='t b' style='left:695px;width:67px;overflow:hidden;top:359px'>97-32</div>
<div class='t b' style='left:770px;width:67px;overflow:hidden;top:359px'>szafy ch...</div>
<div class='t b' style='left:845px;width:67px;overflow:hidden;top:359px'>brak</div>
<div class='t b' style='left:920px;width:63px;overflow:hidden;top:359px'>Dział Za...</div>
<div class='t b' style='left:991px;width:67px;overflow:hidden;top:359px'>w użyciu</div>
<div class='t b' style='left:1066px;width:67px;overflow:hidden;top:359px'>31</div>
<div class='t b' style='left:1141px;width:82px;overflow:hidden;top:359px'>pracownia...</div>
<div class='t b' style='left:1223px;width:104px;text-align:right;top:359px'>1</div>
<div class='t b' style='left:1335px;width:124px;text-align:right;top:359px'>15 190,50</div>
<div class='t b' style='left:1467px;width:147px;text-align:right;top:359px'>15 190,50</div>
<div class='t b' style='left:1630px;width:100px;overflow:hidden;top:359px'>01.08.2011</div>
<div class='t b' style='left:1738px;width:44px;overflow:hidden;top:359px'>66/08/ZZZ</div>
<div class='a' style='left:331px;top:380px;width:1px;height:29px;background:#e3e3e3'></div>
<div class='a' style='left:391px;top:380px;width:1px;height:29px;background:#e3e3e3'></div>
<div class='a' style='left:513px;top:380px;width:1px;height:29px;background:#e3e3e3'></div>
<div class='a' style='left:572px;top:380px;width:1px;height:29px;background:#e3e3e3'></div>
<div class='a' style='left:687px;top:380px;width:1px;height:29px;background:#e3e3e3'></div>
<div class='a' style='left:762px;top:380px;width:1px;height:29px;background:#e3e3e3'></div>
<div class='a' style='left:837px;top:380px;width:1px;height:29px;background:#e3e3e3'></div>
<div class='a' style='left:912px;top:380px;width:1px;height:29px;background:#e3e3e3'></div>
<div class='a' style='left:983px;top:380px;width:1px;height:29px;background:#e3e3e3'></div>
<div class='a' style='left:1058px;top:380px;width:1px;height:29px;background:#e3e3e3'></div>
<div class='a' style='left:1133px;top:380px;width:1px;height:29px;background:#e3e3e3'></div>
<div class='a' style='left:1223px;top:380px;width:1px;height:29px;background:#e3e3e3'></div>
<div class='a' style='left:1335px;top:380px;width:1px;height:29px;background:#e3e3e3'></div>
<div class='a' style='left:1467px;top:380px;width:1px;height:29px;background:#e3e3e3'></div>
<div class='a' style='left:1622px;top:380px;width:1px;height:29px;background:#e3e3e3'></div>
<div class='a' style='left:1730px;top:380px;width:1px;height:29px;background:#e3e3e3'></div>
<div class='a' style='left:353px;top:386px;width:18px;height:18px;background:#fff;border:1px solid #c9c9c9;border-radius:4px'></div>
<div class='a' style='left:399px;top:390px;width:14px;height:11px;background:#a3a8ae;border-radius:2px;color:#fff;font-size:8px;font-weight:bold;line-height:11px;text-align:center;letter-spacing:-0.3px'>ST</div>
<div class='t' style='left:418px;top:388px'>Środek trwały</div>
<div class='t' style='left:520px;width:52px;overflow:hidden;top:388px'>T-43-2...</div>
<div class='t' style='left:579px;width:108px;overflow:hidden;top:388px'>witryna chł...</div>
<div class='t' style='left:1223px;width:104px;text-align:right;top:388px'>1</div>
<div class='t' style='left:1335px;width:124px;text-align:right;top:388px'>13 507,00</div>
<div class='t' style='left:1467px;width:147px;text-align:right;top:388px'>13 507,00</div>
<div class='t' style='left:1629px;width:101px;overflow:hidden;top:388px'>03.08.2010</div>
<div class='t' style='left:1737px;width:45px;overflow:hidden;top:388px'>108/09/ZZZ</div>
<div class='a' style='left:331px;top:409px;width:1px;height:29px;background:#e3e3e3'></div>
<div class='a' style='left:391px;top:409px;width:1px;height:29px;background:#e3e3e3'></div>
<div class='a' style='left:513px;top:409px;width:1px;height:29px;background:#e3e3e3'></div>
<div class='a' style='left:572px;top:409px;width:1px;height:29px;background:#e3e3e3'></div>
<div class='a' style='left:687px;top:409px;width:1px;height:29px;background:#e3e3e3'></div>
<div class='a' style='left:762px;top:409px;width:1px;height:29px;background:#e3e3e3'></div>
<div class='a' style='left:837px;top:409px;width:1px;height:29px;background:#e3e3e3'></div>
<div class='a' style='left:912px;top:409px;width:1px;height:29px;background:#e3e3e3'></div>
<div class='a' style='left:983px;top:409px;width:1px;height:29px;background:#e3e3e3'></div>
<div class='a' style='left:1058px;top:409px;width:1px;height:29px;background:#e3e3e3'></div>
<div class='a' style='left:1133px;top:409px;width:1px;height:29px;background:#e3e3e3'></div>
<div class='a' style='left:1223px;top:409px;width:1px;height:29px;background:#e3e3e3'></div>
<div class='a' style='left:1335px;top:409px;width:1px;height:29px;background:#e3e3e3'></div>
<div class='a' style='left:1467px;top:409px;width:1px;height:29px;background:#e3e3e3'></div>
<div class='a' style='left:1622px;top:409px;width:1px;height:29px;background:#e3e3e3'></div>
<div class='a' style='left:1730px;top:409px;width:1px;height:29px;background:#e3e3e3'></div>
<div class='a' style='left:353px;top:415px;width:18px;height:18px;background:#fff;border:1px solid #c9c9c9;border-radius:4px'></div>
<div class='a' style='left:399px;top:419px;width:14px;height:11px;background:#d2c16a;border-radius:2px;color:#fff;font-size:8px;font-weight:bold;line-height:11px;text-align:center;letter-spacing:-0.3px'>N</div>
<div class='t' style='left:418px;top:417px'>Środek niskocenny</div>
<div class='t' style='left:520px;width:52px;overflow:hidden;top:417px'>I-97-3...</div>
<div class='t' style='left:579px;width:108px;overflow:hidden;top:417px'>szafa chł...</div>
<div class='t' style='left:1223px;width:104px;text-align:right;top:417px'>1</div>
<div class='t' style='left:1335px;width:124px;text-align:right;top:417px'>2 437,08</div>
<div class='t' style='left:1467px;width:147px;text-align:right;top:417px'>2 437,08</div>
<div class='t' style='left:1629px;width:101px;overflow:hidden;top:417px'>22.01.2007</div>
<div class='a' style='left:331px;top:438px;width:1px;height:29px;background:#e3e3e3'></div>
<div class='a' style='left:391px;top:438px;width:1px;height:29px;background:#e3e3e3'></div>
<div class='a' style='left:513px;top:438px;width:1px;height:29px;background:#e3e3e3'></div>
<div class='a' style='left:572px;top:438px;width:1px;height:29px;background:#e3e3e3'></div>
<div class='a' style='left:687px;top:438px;width:1px;height:29px;background:#e3e3e3'></div>
<div class='a' style='left:762px;top:438px;width:1px;height:29px;background:#e3e3e3'></div>
<div class='a' style='left:837px;top:438px;width:1px;height:29px;background:#e3e3e3'></div>
<div class='a' style='left:912px;top:438px;width:1px;height:29px;background:#e3e3e3'></div>
<div class='a' style='left:983px;top:438px;width:1px;height:29px;background:#e3e3e3'></div>
<div class='a' style='left:1058px;top:438px;width:1px;height:29px;background:#e3e3e3'></div>
<div class='a' style='left:1133px;top:438px;width:1px;height:29px;background:#e3e3e3'></div>
<div class='a' style='left:1223px;top:438px;width:1px;height:29px;background:#e3e3e3'></div>
<div class='a' style='left:1335px;top:438px;width:1px;height:29px;background:#e3e3e3'></div>
<div class='a' style='left:1467px;top:438px;width:1px;height:29px;background:#e3e3e3'></div>
<div class='a' style='left:1622px;top:438px;width:1px;height:29px;background:#e3e3e3'></div>
<div class='a' style='left:1730px;top:438px;width:1px;height:29px;background:#e3e3e3'></div>
<div class='a' style='left:353px;top:444px;width:18px;height:18px;background:#fff;border:1px solid #c9c9c9;border-radius:4px'></div>
<div class='a' style='left:399px;top:448px;width:14px;height:11px;background:#d2c16a;border-radius:2px;color:#fff;font-size:8px;font-weight:bold;line-height:11px;text-align:center;letter-spacing:-0.3px'>N</div>
<div class='t' style='left:418px;top:446px'>Środek niskocenny</div>
<div class='t' style='left:520px;width:52px;overflow:hidden;top:446px'>I-97-3...</div>
<div class='t' style='left:579px;width:108px;overflow:hidden;top:446px'>szafa chł...</div>
<div class='t' style='left:1223px;width:104px;text-align:right;top:446px'>1</div>
<div class='t' style='left:1335px;width:124px;text-align:right;top:446px'>2 200,00</div>
<div class='t' style='left:1467px;width:147px;text-align:right;top:446px'>2 200,00</div>
<div class='t' style='left:1629px;width:101px;overflow:hidden;top:446px'>31.03.2006</div>
<div class='t' style='left:1737px;width:45px;overflow:hidden;top:446px'>127/03/zzz</div>
<div class='a' style='left:331px;top:467px;width:1px;height:29px;background:#e3e3e3'></div>
<div class='a' style='left:391px;top:467px;width:1px;height:29px;background:#e3e3e3'></div>
<div class='a' style='left:513px;top:467px;width:1px;height:29px;background:#e3e3e3'></div>
<div class='a' style='left:572px;top:467px;width:1px;height:29px;background:#e3e3e3'></div>
<div class='a' style='left:687px;top:467px;width:1px;height:29px;background:#e3e3e3'></div>
<div class='a' style='left:762px;top:467px;width:1px;height:29px;background:#e3e3e3'></div>
<div class='a' style='left:837px;top:467px;width:1px;height:29px;background:#e3e3e3'></div>
<div class='a' style='left:912px;top:467px;width:1px;height:29px;background:#e3e3e3'></div>
<div class='a' style='left:983px;top:467px;width:1px;height:29px;background:#e3e3e3'></div>
<div class='a' style='left:1058px;top:467px;width:1px;height:29px;background:#e3e3e3'></div>
<div class='a' style='left:1133px;top:467px;width:1px;height:29px;background:#e3e3e3'></div>
<div class='a' style='left:1223px;top:467px;width:1px;height:29px;background:#e3e3e3'></div>
<div class='a' style='left:1335px;top:467px;width:1px;height:29px;background:#e3e3e3'></div>
<div class='a' style='left:1467px;top:467px;width:1px;height:29px;background:#e3e3e3'></div>
<div class='a' style='left:1622px;top:467px;width:1px;height:29px;background:#e3e3e3'></div>
<div class='a' style='left:1730px;top:467px;width:1px;height:29px;background:#e3e3e3'></div>
<div class='a' style='left:353px;top:473px;width:18px;height:18px;background:#fff;border:1px solid #c9c9c9;border-radius:4px'></div>
<div class='a' style='left:399px;top:477px;width:14px;height:11px;background:#d2c16a;border-radius:2px;color:#fff;font-size:8px;font-weight:bold;line-height:11px;text-align:center;letter-spacing:-0.3px'>N</div>
<div class='t' style='left:418px;top:475px'>Środek niskocenny</div>
<div class='t' style='left:520px;width:52px;overflow:hidden;top:475px'>I-97-3...</div>
<div class='t' style='left:579px;width:108px;overflow:hidden;top:475px'>szafa chł...</div>
<div class='t' style='left:1223px;width:104px;text-align:right;top:475px'>1</div>
<div class='t' style='left:1335px;width:124px;text-align:right;top:475px'>2 213,12</div>
<div class='t' style='left:1467px;width:147px;text-align:right;top:475px'>2 213,12</div>
<div class='t' style='left:1629px;width:101px;overflow:hidden;top:475px'>31.10.2003</div>
<div class='t' style='left:1737px;width:45px;overflow:hidden;top:475px'>41/10/p</div>
<div class='a' style='left:331px;top:496px;width:1px;height:29px;background:#e3e3e3'></div>
<div class='a' style='left:391px;top:496px;width:1px;height:29px;background:#e3e3e3'></div>
<div class='a' style='left:513px;top:496px;width:1px;height:29px;background:#e3e3e3'></div>
<div class='a' style='left:572px;top:496px;width:1px;height:29px;background:#e3e3e3'></div>
<div class='a' style='left:687px;top:496px;width:1px;height:29px;background:#e3e3e3'></div>
<div class='a' style='left:762px;top:496px;width:1px;height:29px;background:#e3e3e3'></div>
<div class='a' style='left:837px;top:496px;width:1px;height:29px;background:#e3e3e3'></div>
<div class='a' style='left:912px;top:496px;width:1px;height:29px;background:#e3e3e3'></div>
<div class='a' style='left:983px;top:496px;width:1px;height:29px;background:#e3e3e3'></div>
<div class='a' style='left:1058px;top:496px;width:1px;height:29px;background:#e3e3e3'></div>
<div class='a' style='left:1133px;top:496px;width:1px;height:29px;background:#e3e3e3'></div>
<div class='a' style='left:1223px;top:496px;width:1px;height:29px;background:#e3e3e3'></div>
<div class='a' style='left:1335px;top:496px;width:1px;height:29px;background:#e3e3e3'></div>
<div class='a' style='left:1467px;top:496px;width:1px;height:29px;background:#e3e3e3'></div>
<div class='a' style='left:1622px;top:496px;width:1px;height:29px;background:#e3e3e3'></div>
<div class='a' style='left:1730px;top:496px;width:1px;height:29px;background:#e3e3e3'></div>
<div class='a' style='left:353px;top:502px;width:18px;height:18px;background:#fff;border:1px solid #c9c9c9;border-radius:4px'></div>
<div class='a' style='left:399px;top:506px;width:14px;height:11px;background:#d2c16a;border-radius:2px;color:#fff;font-size:8px;font-weight:bold;line-height:11px;text-align:center;letter-spacing:-0.3px'>N</div>
<div class='t' style='left:418px;top:504px'>Środek niskocenny</div>
<div class='t' style='left:520px;width:52px;overflow:hidden;top:504px'>I-97-3...</div>
<div class='t' style='left:579px;width:108px;overflow:hidden;top:504px'>szafa chł...</div>
<div class='t' style='left:1223px;width:104px;text-align:right;top:504px'>1</div>
<div class='t' style='left:1335px;width:124px;text-align:right;top:504px'>1 633,00</div>
<div class='t' style='left:1467px;width:147px;text-align:right;top:504px'>1 633,00</div>
<div class='t' style='left:1629px;width:101px;overflow:hidden;top:504px'>01.01.1999</div>
<div class='t' style='left:1737px;width:45px;overflow:hidden;top:504px'>8135</div>
<div class='a' style='left:331px;top:525px;width:1px;height:29px;background:#e3e3e3'></div>
<div class='a' style='left:391px;top:525px;width:1px;height:29px;background:#e3e3e3'></div>
<div class='a' style='left:513px;top:525px;width:1px;height:29px;background:#e3e3e3'></div>
<div class='a' style='left:572px;top:525px;width:1px;height:29px;background:#e3e3e3'></div>
<div class='a' style='left:687px;top:525px;width:1px;height:29px;background:#e3e3e3'></div>
<div class='a' style='left:762px;top:525px;width:1px;height:29px;background:#e3e3e3'></div>
<div class='a' style='left:837px;top:525px;width:1px;height:29px;background:#e3e3e3'></div>
<div class='a' style='left:912px;top:525px;width:1px;height:29px;background:#e3e3e3'></div>
<div class='a' style='left:983px;top:525px;width:1px;height:29px;background:#e3e3e3'></div>
<div class='a' style='left:1058px;top:525px;width:1px;height:29px;background:#e3e3e3'></div>
<div class='a' style='left:1133px;top:525px;width:1px;height:29px;background:#e3e3e3'></div>
<div class='a' style='left:1223px;top:525px;width:1px;height:29px;background:#e3e3e3'></div>
<div class='a' style='left:1335px;top:525px;width:1px;height:29px;background:#e3e3e3'></div>
<div class='a' style='left:1467px;top:525px;width:1px;height:29px;background:#e3e3e3'></div>
<div class='a' style='left:1622px;top:525px;width:1px;height:29px;background:#e3e3e3'></div>
<div class='a' style='left:1730px;top:525px;width:1px;height:29px;background:#e3e3e3'></div>
<div class='a' style='left:353px;top:531px;width:18px;height:18px;background:#fff;border:1px solid #c9c9c9;border-radius:4px'></div>
<div class='a' style='left:399px;top:535px;width:14px;height:11px;background:#d2c16a;border-radius:2px;color:#fff;font-size:8px;font-weight:bold;line-height:11px;text-align:center;letter-spacing:-0.3px'>N</div>
<div class='t' style='left:418px;top:533px'>Środek niskocenny</div>
<div class='t' style='left:520px;width:52px;overflow:hidden;top:533px'>I-97-3...</div>
<div class='t' style='left:579px;width:108px;overflow:hidden;top:533px'>szafa chł...</div>
<div class='t' style='left:1223px;width:104px;text-align:right;top:533px'>1</div>
<div class='t' style='left:1335px;width:124px;text-align:right;top:533px'>1 690,00</div>
<div class='t' style='left:1467px;width:147px;text-align:right;top:533px'>1 690,00</div>
<div class='t' style='left:1629px;width:101px;overflow:hidden;top:533px'>31.12.1997</div>
<div class='t' style='left:1737px;width:45px;overflow:hidden;top:533px'>5014</div>
<div class='a' style='left:331px;top:554px;width:1px;height:29px;background:#e3e3e3'></div>
<div class='a' style='left:391px;top:554px;width:1px;height:29px;background:#e3e3e3'></div>
<div class='a' style='left:513px;top:554px;width:1px;height:29px;background:#e3e3e3'></div>
<div class='a' style='left:572px;top:554px;width:1px;height:29px;background:#e3e3e3'></div>
<div class='a' style='left:687px;top:554px;width:1px;height:29px;background:#e3e3e3'></div>
<div class='a' style='left:762px;top:554px;width:1px;height:29px;background:#e3e3e3'></div>
<div class='a' style='left:837px;top:554px;width:1px;height:29px;background:#e3e3e3'></div>
<div class='a' style='left:912px;top:554px;width:1px;height:29px;background:#e3e3e3'></div>
<div class='a' style='left:983px;top:554px;width:1px;height:29px;background:#e3e3e3'></div>
<div class='a' style='left:1058px;top:554px;width:1px;height:29px;background:#e3e3e3'></div>
<div class='a' style='left:1133px;top:554px;width:1px;height:29px;background:#e3e3e3'></div>
<div class='a' style='left:1223px;top:554px;width:1px;height:29px;background:#e3e3e3'></div>
<div class='a' style='left:1335px;top:554px;width:1px;height:29px;background:#e3e3e3'></div>
<div class='a' style='left:1467px;top:554px;width:1px;height:29px;background:#e3e3e3'></div>
<div class='a' style='left:1622px;top:554px;width:1px;height:29px;background:#e3e3e3'></div>
<div class='a' style='left:1730px;top:554px;width:1px;height:29px;background:#e3e3e3'></div>
<div class='a' style='left:353px;top:560px;width:18px;height:18px;background:#fff;border:1px solid #c9c9c9;border-radius:4px'></div>
<div class='a' style='left:399px;top:564px;width:14px;height:11px;background:#d2c16a;border-radius:2px;color:#fff;font-size:8px;font-weight:bold;line-height:11px;text-align:center;letter-spacing:-0.3px'>N</div>
<div class='t' style='left:418px;top:562px'>Środek niskocenny</div>
<div class='t' style='left:520px;width:52px;overflow:hidden;top:562px'>I-97-3...</div>
<div class='t' style='left:579px;width:108px;overflow:hidden;top:562px'>szafa chł...</div>
<div class='t' style='left:1223px;width:104px;text-align:right;top:562px'>1</div>
<div class='t' style='left:1335px;width:124px;text-align:right;top:562px'>1 690,00</div>
<div class='t' style='left:1467px;width:147px;text-align:right;top:562px'>1 690,00</div>
<div class='t' style='left:1629px;width:101px;overflow:hidden;top:562px'>31.12.1997</div>
<div class='t' style='left:1737px;width:45px;overflow:hidden;top:562px'>5014</div>
<div class='a' style='left:331px;top:583px;width:1px;height:29px;background:#e3e3e3'></div>
<div class='a' style='left:391px;top:583px;width:1px;height:29px;background:#e3e3e3'></div>
<div class='a' style='left:513px;top:583px;width:1px;height:29px;background:#e3e3e3'></div>
<div class='a' style='left:572px;top:583px;width:1px;height:29px;background:#e3e3e3'></div>
<div class='a' style='left:687px;top:583px;width:1px;height:29px;background:#e3e3e3'></div>
<div class='a' style='left:762px;top:583px;width:1px;height:29px;background:#e3e3e3'></div>
<div class='a' style='left:837px;top:583px;width:1px;height:29px;background:#e3e3e3'></div>
<div class='a' style='left:912px;top:583px;width:1px;height:29px;background:#e3e3e3'></div>
<div class='a' style='left:983px;top:583px;width:1px;height:29px;background:#e3e3e3'></div>
<div class='a' style='left:1058px;top:583px;width:1px;height:29px;background:#e3e3e3'></div>
<div class='a' style='left:1133px;top:583px;width:1px;height:29px;background:#e3e3e3'></div>
<div class='a' style='left:1223px;top:583px;width:1px;height:29px;background:#e3e3e3'></div>
<div class='a' style='left:1335px;top:583px;width:1px;height:29px;background:#e3e3e3'></div>
<div class='a' style='left:1467px;top:583px;width:1px;height:29px;background:#e3e3e3'></div>
<div class='a' style='left:1622px;top:583px;width:1px;height:29px;background:#e3e3e3'></div>
<div class='a' style='left:1730px;top:583px;width:1px;height:29px;background:#e3e3e3'></div>
<div class='a' style='left:353px;top:589px;width:18px;height:18px;background:#fff;border:1px solid #c9c9c9;border-radius:4px'></div>
<div class='a' style='left:399px;top:593px;width:14px;height:11px;background:#d2c16a;border-radius:2px;color:#fff;font-size:8px;font-weight:bold;line-height:11px;text-align:center;letter-spacing:-0.3px'>N</div>
<div class='t' style='left:418px;top:591px'>Środek niskocenny</div>
<div class='t' style='left:520px;width:52px;overflow:hidden;top:591px'>I-97-3...</div>
<div class='t' style='left:579px;width:108px;overflow:hidden;top:591px'>szafa chł...</div>
<div class='t' style='left:1223px;width:104px;text-align:right;top:591px'>1</div>
<div class='t' style='left:1335px;width:124px;text-align:right;top:591px'>1 690,00</div>
<div class='t' style='left:1467px;width:147px;text-align:right;top:591px'>1 690,00</div>
<div class='t' style='left:1629px;width:101px;overflow:hidden;top:591px'>31.12.1997</div>
<div class='t' style='left:1737px;width:45px;overflow:hidden;top:591px'>5014</div>
<div class='a' style='left:331px;top:612px;width:1px;height:29px;background:#e3e3e3'></div>
<div class='a' style='left:391px;top:612px;width:1px;height:29px;background:#e3e3e3'></div>
<div class='a' style='left:513px;top:612px;width:1px;height:29px;background:#e3e3e3'></div>
<div class='a' style='left:572px;top:612px;width:1px;height:29px;background:#e3e3e3'></div>
<div class='a' style='left:687px;top:612px;width:1px;height:29px;background:#e3e3e3'></div>
<div class='a' style='left:762px;top:612px;width:1px;height:29px;background:#e3e3e3'></div>
<div class='a' style='left:837px;top:612px;width:1px;height:29px;background:#e3e3e3'></div>
<div class='a' style='left:912px;top:612px;width:1px;height:29px;background:#e3e3e3'></div>
<div class='a' style='left:983px;top:612px;width:1px;height:29px;background:#e3e3e3'></div>
<div class='a' style='left:1058px;top:612px;width:1px;height:29px;background:#e3e3e3'></div>
<div class='a' style='left:1133px;top:612px;width:1px;height:29px;background:#e3e3e3'></div>
<div class='a' style='left:1223px;top:612px;width:1px;height:29px;background:#e3e3e3'></div>
<div class='a' style='left:1335px;top:612px;width:1px;height:29px;background:#e3e3e3'></div>
<div class='a' style='left:1467px;top:612px;width:1px;height:29px;background:#e3e3e3'></div>
<div class='a' style='left:1622px;top:612px;width:1px;height:29px;background:#e3e3e3'></div>
<div class='a' style='left:1730px;top:612px;width:1px;height:29px;background:#e3e3e3'></div>
<div class='a' style='left:353px;top:618px;width:18px;height:18px;background:#fff;border:1px solid #c9c9c9;border-radius:4px'></div>
<div class='a' style='left:399px;top:622px;width:14px;height:11px;background:#d2c16a;border-radius:2px;color:#fff;font-size:8px;font-weight:bold;line-height:11px;text-align:center;letter-spacing:-0.3px'>N</div>
<div class='t' style='left:418px;top:620px'>Środek niskocenny</div>
<div class='t' style='left:520px;width:52px;overflow:hidden;top:620px'>I-97-3...</div>
<div class='t' style='left:579px;width:108px;overflow:hidden;top:620px'>szafa chł...</div>
<div class='t' style='left:1223px;width:104px;text-align:right;top:620px'>1</div>
<div class='t' style='left:1335px;width:124px;text-align:right;top:620px'>1 631,34</div>
<div class='t' style='left:1467px;width:147px;text-align:right;top:620px'>1 631,34</div>
<div class='t' style='left:1629px;width:101px;overflow:hidden;top:620px'>31.10.1996</div>
<div class='t' style='left:1737px;width:45px;overflow:hidden;top:620px'>3819</div>
<div class='a' style='left:331px;top:641px;width:1px;height:29px;background:#e3e3e3'></div>
<div class='a' style='left:391px;top:641px;width:1px;height:29px;background:#e3e3e3'></div>
<div class='a' style='left:513px;top:641px;width:1px;height:29px;background:#e3e3e3'></div>
<div class='a' style='left:572px;top:641px;width:1px;height:29px;background:#e3e3e3'></div>
<div class='a' style='left:687px;top:641px;width:1px;height:29px;background:#e3e3e3'></div>
<div class='a' style='left:762px;top:641px;width:1px;height:29px;background:#e3e3e3'></div>
<div class='a' style='left:837px;top:641px;width:1px;height:29px;background:#e3e3e3'></div>
<div class='a' style='left:912px;top:641px;width:1px;height:29px;background:#e3e3e3'></div>
<div class='a' style='left:983px;top:641px;width:1px;height:29px;background:#e3e3e3'></div>
<div class='a' style='left:1058px;top:641px;width:1px;height:29px;background:#e3e3e3'></div>
<div class='a' style='left:1133px;top:641px;width:1px;height:29px;background:#e3e3e3'></div>
<div class='a' style='left:1223px;top:641px;width:1px;height:29px;background:#e3e3e3'></div>
<div class='a' style='left:1335px;top:641px;width:1px;height:29px;background:#e3e3e3'></div>
<div class='a' style='left:1467px;top:641px;width:1px;height:29px;background:#e3e3e3'></div>
<div class='a' style='left:1622px;top:641px;width:1px;height:29px;background:#e3e3e3'></div>
<div class='a' style='left:1730px;top:641px;width:1px;height:29px;background:#e3e3e3'></div>
<div class='a' style='left:353px;top:647px;width:18px;height:18px;background:#fff;border:1px solid #c9c9c9;border-radius:4px'></div>
<div class='a' style='left:399px;top:651px;width:14px;height:11px;background:#d2c16a;border-radius:2px;color:#fff;font-size:8px;font-weight:bold;line-height:11px;text-align:center;letter-spacing:-0.3px'>N</div>
<div class='t' style='left:418px;top:649px'>Środek niskocenny</div>
<div class='t' style='left:520px;width:52px;overflow:hidden;top:649px'>I-97-3...</div>
<div class='t' style='left:579px;width:108px;overflow:hidden;top:649px'>szafa chł...</div>
<div class='t' style='left:1223px;width:104px;text-align:right;top:649px'>1</div>
<div class='t' style='left:1335px;width:124px;text-align:right;top:649px'>1 631,34</div>
<div class='t' style='left:1467px;width:147px;text-align:right;top:649px'>1 631,34</div>
<div class='t' style='left:1629px;width:101px;overflow:hidden;top:649px'>31.10.1996</div>
<div class='t' style='left:1737px;width:45px;overflow:hidden;top:649px'>3819</div>
<div class='a' style='left:331px;top:670px;width:1px;height:29px;background:#e3e3e3'></div>
<div class='a' style='left:391px;top:670px;width:1px;height:29px;background:#e3e3e3'></div>
<div class='a' style='left:513px;top:670px;width:1px;height:29px;background:#e3e3e3'></div>
<div class='a' style='left:572px;top:670px;width:1px;height:29px;background:#e3e3e3'></div>
<div class='a' style='left:687px;top:670px;width:1px;height:29px;background:#e3e3e3'></div>
<div class='a' style='left:762px;top:670px;width:1px;height:29px;background:#e3e3e3'></div>
<div class='a' style='left:837px;top:670px;width:1px;height:29px;background:#e3e3e3'></div>
<div class='a' style='left:912px;top:670px;width:1px;height:29px;background:#e3e3e3'></div>
<div class='a' style='left:983px;top:670px;width:1px;height:29px;background:#e3e3e3'></div>
<div class='a' style='left:1058px;top:670px;width:1px;height:29px;background:#e3e3e3'></div>
<div class='a' style='left:1133px;top:670px;width:1px;height:29px;background:#e3e3e3'></div>
<div class='a' style='left:1223px;top:670px;width:1px;height:29px;background:#e3e3e3'></div>
<div class='a' style='left:1335px;top:670px;width:1px;height:29px;background:#e3e3e3'></div>
<div class='a' style='left:1467px;top:670px;width:1px;height:29px;background:#e3e3e3'></div>
<div class='a' style='left:1622px;top:670px;width:1px;height:29px;background:#e3e3e3'></div>
<div class='a' style='left:1730px;top:670px;width:1px;height:29px;background:#e3e3e3'></div>
<div class='a' style='left:353px;top:676px;width:18px;height:18px;background:#fff;border:1px solid #c9c9c9;border-radius:4px'></div>
<div class='a' style='left:399px;top:680px;width:14px;height:11px;background:#d2c16a;border-radius:2px;color:#fff;font-size:8px;font-weight:bold;line-height:11px;text-align:center;letter-spacing:-0.3px'>N</div>
<div class='t' style='left:418px;top:678px'>Środek niskocenny</div>
<div class='t' style='left:520px;width:52px;overflow:hidden;top:678px'>I-97-3...</div>
<div class='t' style='left:579px;width:108px;overflow:hidden;top:678px'>szafa chł...</div>
<div class='t' style='left:1223px;width:104px;text-align:right;top:678px'>1</div>
<div class='t' style='left:1335px;width:124px;text-align:right;top:678px'>1 631,34</div>
<div class='t' style='left:1467px;width:147px;text-align:right;top:678px'>1 631,34</div>
<div class='t' style='left:1629px;width:101px;overflow:hidden;top:678px'>31.10.1996</div>
<div class='t' style='left:1737px;width:45px;overflow:hidden;top:678px'>3819</div>
<div class='a' style='left:331px;top:699px;width:1px;height:29px;background:#e3e3e3'></div>
<div class='a' style='left:391px;top:699px;width:1px;height:29px;background:#e3e3e3'></div>
<div class='a' style='left:513px;top:699px;width:1px;height:29px;background:#e3e3e3'></div>
<div class='a' style='left:572px;top:699px;width:1px;height:29px;background:#e3e3e3'></div>
<div class='a' style='left:687px;top:699px;width:1px;height:29px;background:#e3e3e3'></div>
<div class='a' style='left:762px;top:699px;width:1px;height:29px;background:#e3e3e3'></div>
<div class='a' style='left:837px;top:699px;width:1px;height:29px;background:#e3e3e3'></div>
<div class='a' style='left:912px;top:699px;width:1px;height:29px;background:#e3e3e3'></div>
<div class='a' style='left:983px;top:699px;width:1px;height:29px;background:#e3e3e3'></div>
<div class='a' style='left:1058px;top:699px;width:1px;height:29px;background:#e3e3e3'></div>
<div class='a' style='left:1133px;top:699px;width:1px;height:29px;background:#e3e3e3'></div>
<div class='a' style='left:1223px;top:699px;width:1px;height:29px;background:#e3e3e3'></div>
<div class='a' style='left:1335px;top:699px;width:1px;height:29px;background:#e3e3e3'></div>
<div class='a' style='left:1467px;top:699px;width:1px;height:29px;background:#e3e3e3'></div>
<div class='a' style='left:1622px;top:699px;width:1px;height:29px;background:#e3e3e3'></div>
<div class='a' style='left:1730px;top:699px;width:1px;height:29px;background:#e3e3e3'></div>
<div class='a' style='left:353px;top:705px;width:18px;height:18px;background:#fff;border:1px solid #c9c9c9;border-radius:4px'></div>
<div class='a' style='left:399px;top:709px;width:14px;height:11px;background:#d2c16a;border-radius:2px;color:#fff;font-size:8px;font-weight:bold;line-height:11px;text-align:center;letter-spacing:-0.3px'>N</div>
<div class='t' style='left:418px;top:707px'>Środek niskocenny</div>
<div class='t' style='left:520px;width:52px;overflow:hidden;top:707px'>I-97-3...</div>
<div class='t' style='left:579px;width:108px;overflow:hidden;top:707px'>szafa chł...</div>
<div class='t' style='left:1223px;width:104px;text-align:right;top:707px'>1</div>
<div class='t' style='left:1335px;width:124px;text-align:right;top:707px'>1 631,34</div>
<div class='t' style='left:1467px;width:147px;text-align:right;top:707px'>1 631,34</div>
<div class='t' style='left:1629px;width:101px;overflow:hidden;top:707px'>31.10.1996</div>
<div class='t' style='left:1737px;width:45px;overflow:hidden;top:707px'>3819</div>
<div class='a' style='left:302px;top:864px;width:1480px;height:49px;background:#f9f9f9;border-top:1px solid #e3e3e3'></div>
<div class='a' style='left:393px;top:873px;width:120px;height:32px;background:#fff;border:1px solid #e6e6e6;border-radius:3px'></div>
<div class='t' style='left:393px;width:108px;text-align:right;top:882px'>Ilość: 16</div>
<div class='a' style='left:1226px;top:873px;width:109px;height:32px;background:#fff;border:1px solid #e6e6e6;border-radius:3px'></div>
<div class='t' style='left:1226px;width:97px;text-align:right;top:882px'>Suma: 16</div>
<div class='a' style='left:1338px;top:873px;width:129px;height:32px;background:#fff;border:1px solid #e6e6e6;border-radius:3px'></div>
<div class='t' style='left:1338px;width:117px;text-align:right;top:882px'>Suma: 94 302,52</div>
<div class='a' style='left:1469px;top:873px;width:153px;height:32px;background:#fff;border:1px solid #e6e6e6;border-radius:3px'></div>
<div class='t' style='left:1469px;width:141px;text-align:right;top:882px'>Suma: 94 302,52</div>
<div class='a' style='left:302px;top:913px;width:1480px;height:18px;background:#f3f3f3'></div>
<div class='a' style='left:319px;top:920px;width:926px;height:3px;background:#9c9c9c;border-radius:1.5px'></div>
<div class='a' style='left:302px;top:930px;width:1480px;height:44px;background:#f3f3f3;border-top:1px solid #e0e0e0'></div>
<svg class='a' style='left:318px;top:946px' width='11' height='11'><path d='M1 1L10 10M10 1L1 10' stroke='#333' stroke-width='1.2'/></svg>
<div class='a' style='left:341px;top:943px;width:18px;height:18px;background:#0d64c6;border-radius:3px'></div>
<svg class='a' style='left:341px;top:943px' width='18' height='18'><path d='M4.5 9.5L7.5 12.5L13.5 6' fill='none' stroke='#fff' stroke-width='1.3'/></svg>
<div class='a' style='left:374px;top:938px;width:5px;height:28px;border:1px solid #777;border-right:none;border-radius:3px 0 0 3px'></div>
<div class='a' style='left:548px;top:938px;width:5px;height:28px;border:1px solid #777;border-left:none;border-radius:0 3px 3px 0'></div>
<div class='a' style='left:379px;top:939px;width:48px;height:26px;background:#fae3c9;border:1px solid #f0d2b0;border-radius:3px'></div>
<div class='t' style='left:379px;width:48px;text-align:center;top:945px'>Nazwa</div>
<div class='a' style='left:429px;top:939px;width:58px;height:26px;background:#cfe3f5;border:1px solid #b9d3ea;border-radius:3px'></div>
<div class='t' style='left:429px;width:58px;text-align:center;top:945px'>Contains</div>
<div class='a' style='left:489px;top:939px;width:59px;height:26px;background:#cfe6de;border:1px solid #b6d6c9;border-radius:3px'></div>
<div class='t' style='left:489px;width:59px;text-align:center;top:945px'>szafa chł</div>
<svg class='a' style='left:572px;top:949px' width='11' height='7'><path d='M1 1L5 5L9 1' fill='none' stroke='#333' stroke-width='1.1'/></svg>
<div class='a' style='left:1705px;top:940px;width:68px;height:26px;background:#fff;border:1px solid #e6e6e6;border-radius:4px'></div>
<div class='t' style='left:1705px;width:68px;text-align:center;top:946px'>Edit Filter</div>
<div class='a' style='left:1px;top:977px;width:1797px;height:22px;background:#f0f0f0;border-top:1px solid #dadada'></div>
<div class='a' style='left:1px;top:978px;width:185px;height:21px;background:#f3f3f3'></div>
<div class='t' style='left:5px;top:982px;font-size:12.2px'>Zalogowany użytkownik:&nbsp; full test</div>
<svg class='a' style='left:1785px;top:985px' width='12' height='12'><g fill='#888'><rect x='8' y='0' width='2' height='2'/><rect x='4' y='4' width='2' height='2'/><rect x='8' y='4' width='2' height='2'/><rect x='0' y='8' width='2' height='2'/><rect x='4' y='8' width='2' height='2'/><rect x='8' y='8' width='2' height='2'/></g></svg>
<div class='a' style='left:605px;top:321px;width:754px;height:470px;background:#f0f0f0;border:1px solid #646464;box-shadow:1px 4px 16px rgba(0,0,0,0.3)'></div>
<div class='a' style='left:606px;top:322px;width:752px;height:30px;background:#fff'></div>
<div class='t' style='left:614px;top:330px;font-size:11.6px;color:#111'>Inwentaryzacja...</div>
<svg class='a' style='left:1337px;top:330px' width='12' height='12'><path d='M1 1L11 11M11 1L1 11' stroke='#111' stroke-width='1.1'/></svg>
<div class='a' style='left:610px;top:376px;width:742px;height:379px;background:#fff;border:1px solid #dadada'></div>
<div class='a' style='left:610px;top:356px;width:87px;height:21px;background:#fff;border:1px solid #dadada;border-bottom:none'></div>
<div class='a' style='left:696px;top:358px;width:46px;height:18px;background:#f0f0f0;border:1px solid #dadada;border-bottom:none'></div>
<div class='t' style='left:618px;top:360px;font-size:11px;color:#111'>Inwentaryzacja</div>
<div class='t' style='left:701px;top:361px;font-size:11px;color:#111'>Raporty</div>
<div class='a' style='left:622px;top:392px;width:720px;height:49px;border:1px solid #dcdcdc'></div>
<div class='t' style='left:628px;top:386px;background:#fff;padding:0 3px;font-size:11px;color:#111'>Szukaj</div>
<div class='a' style='left:638px;top:408px;width:688px;height:20px;background:#fff;border:1px solid #7a7a7a'></div>
<div class='a' style='left:622px;top:450px;width:720px;height:226px;background:#fff;border:1px solid #828790'></div>
<div class='a' style='left:673px;top:451px;width:1px;height:24px;background:#e5e5e5'></div>
<div class='a' style='left:815px;top:451px;width:1px;height:24px;background:#e5e5e5'></div>
<div class='a' style='left:889px;top:451px;width:1px;height:24px;background:#e5e5e5'></div>
<div class='a' style='left:1090px;top:451px;width:1px;height:24px;background:#e5e5e5'></div>
<div class='a' style='left:1152px;top:451px;width:1px;height:24px;background:#e5e5e5'></div>
<div class='a' style='left:1267px;top:451px;width:1px;height:24px;background:#e5e5e5'></div>
<div class='t' style='left:630px;top:457px;font-size:11px;color:#111'>Kod k...</div>
<div class='t' style='left:680px;top:457px;font-size:11px;color:#111'>Nazwa</div>
<div class='t' style='left:815px;width:69px;text-align:right;top:457px;font-size:11px;color:#111'>Ilość nowa</div>
<div class='t' style='left:896px;top:457px;font-size:11px;color:#111'>Lokalizacja</div>
<div class='t' style='left:1097px;top:457px;font-size:11px;color:#111'>Lokaliza...</div>
<div class='t' style='left:1159px;top:457px;font-size:11px;color:#111'>Grupa</div>
<div class='t' style='left:1274px;top:457px;font-size:11px;color:#111'>Departament</div>
<div class='a' style='left:628px;top:476px;width:712px;height:68px;background:#f08080'></div>
<div class='t' style='left:630px;font-weight:bold;font-size:12.4px;color:#111;top:478px;width:42px;overflow:hidden'>T-97-...</div>
<div class='t' style='left:680px;font-weight:bold;font-size:12.4px;color:#111;top:478px'>szafa chłodnicza W...</div>
<div class='t' style='left:815px;width:70px;text-align:right;font-weight:bold;font-size:12.4px;color:#111;top:478px'>1 (0)</div>
<div class='t' style='left:897px;font-weight:bold;font-size:12.4px;color:#111;top:478px'>31</div>
<div class='t' style='left:917px;font-weight:bold;font-size:12.4px;color:#111;top:478px'>pracownia zwalniania prep...</div>
<div class='t' style='left:1097px;font-weight:bold;font-size:12.4px;color:#111;top:478px'>?</div>
<div class='t' style='left:1159px;font-weight:bold;font-size:12.4px;color:#111;top:478px'>szafy chłodnicze</div>
<div class='t' style='left:1275px;font-weight:bold;font-size:12.4px;color:#111;top:478px;width:65px;overflow:hidden'>Dział Zapewnienia</div>
<div class='t' style='left:630px;font-weight:bold;font-size:12.4px;color:#111;top:495px;width:42px;overflow:hidden'>T-97-...</div>
<div class='t' style='left:680px;font-weight:bold;font-size:12.4px;color:#111;top:495px'>szafa chłodnicza W...</div>
<div class='t' style='left:815px;width:70px;text-align:right;font-weight:bold;font-size:12.4px;color:#111;top:495px'>1 (0)</div>
<div class='t' style='left:897px;font-weight:bold;font-size:12.4px;color:#111;top:495px'>31</div>
<div class='t' style='left:917px;font-weight:bold;font-size:12.4px;color:#111;top:495px'>pracownia zwalniania prep...</div>
<div class='t' style='left:1097px;font-weight:bold;font-size:12.4px;color:#111;top:495px'>?</div>
<div class='t' style='left:1159px;font-weight:bold;font-size:12.4px;color:#111;top:495px'>szafy chłodnicze</div>
<div class='t' style='left:1275px;font-weight:bold;font-size:12.4px;color:#111;top:495px;width:65px;overflow:hidden'>Dział Zapewnienia</div>
<div class='t' style='left:630px;font-weight:bold;font-size:12.4px;color:#111;top:512px;width:42px;overflow:hidden'>T-97-...</div>
<div class='t' style='left:680px;font-weight:bold;font-size:12.4px;color:#111;top:512px'>szafa chłodnicza SN...</div>
<div class='t' style='left:815px;width:70px;text-align:right;font-weight:bold;font-size:12.4px;color:#111;top:512px'>1 (0)</div>
<div class='t' style='left:897px;font-weight:bold;font-size:12.4px;color:#111;top:512px'>32</div>
<div class='t' style='left:917px;font-weight:bold;font-size:12.4px;color:#111;top:512px'>magazyn osocza zamrażarki</div>
<div class='t' style='left:1097px;font-weight:bold;font-size:12.4px;color:#111;top:512px'>?</div>
<div class='t' style='left:1159px;font-weight:bold;font-size:12.4px;color:#111;top:512px'>szafy chłodnicze</div>
<div class='t' style='left:1275px;font-weight:bold;font-size:12.4px;color:#111;top:512px;width:65px;overflow:hidden'>Dział Preparatów</div>
<div class='t' style='left:630px;font-weight:bold;font-size:12.4px;color:#111;top:529px;width:42px;overflow:hidden'>T-97-...</div>
<div class='t' style='left:680px;font-weight:bold;font-size:12.4px;color:#111;top:529px'>szafa chłodnicza SN...</div>
<div class='t' style='left:815px;width:70px;text-align:right;font-weight:bold;font-size:12.4px;color:#111;top:529px'>1 (0)</div>
<div class='t' style='left:897px;font-weight:bold;font-size:12.4px;color:#111;top:529px'>32</div>
<div class='t' style='left:917px;font-weight:bold;font-size:12.4px;color:#111;top:529px'>magazyn osocza zamrażarki</div>
<div class='t' style='left:1097px;font-weight:bold;font-size:12.4px;color:#111;top:529px'>?</div>
<div class='t' style='left:1159px;font-weight:bold;font-size:12.4px;color:#111;top:529px'>szafy chłodnicze</div>
<div class='t' style='left:1275px;font-weight:bold;font-size:12.4px;color:#111;top:529px;width:65px;overflow:hidden'>Dział Preparatów</div>
<div class='a' style='left:623px;top:658px;width:718px;height:17px;background:#f0f0f0'></div>
<div class='a' style='left:641px;top:659px;width:643px;height:15px;background:#cdcdcd'></div>
<svg class='a' style='left:628px;top:661px' width='8' height='10'><path d='M6 1L2 5L6 9' fill='none' stroke='#555' stroke-width='1.6'/></svg>
<svg class='a' style='left:1327px;top:661px' width='8' height='10'><path d='M2 1L6 5L2 9' fill='none' stroke='#555' stroke-width='1.6'/></svg>
<div class='a' style='left:622px;top:685px;width:720px;height:57px;border:1px solid #dcdcdc'></div>
<div class='t' style='left:628px;top:679px;background:#fff;padding:0 2px;font-size:11px;color:#111'>Operacje</div>
<div class='a' style='left:639px;top:704px;width:118px;height:21px;background:#e1e1e1;border:1px solid #adadad'></div>
<div class='t' style='left:639px;width:118px;text-align:center;top:708px;font-size:11px;color:#111'>Eksport do chmury</div>
<div class='a' style='left:767px;top:704px;width:118px;height:21px;background:#e1e1e1;border:1px solid #adadad'></div>
<div class='t' style='left:767px;width:118px;text-align:center;top:708px;font-size:11px;color:#111'>Import z kolektora</div>
<div class='a' style='left:893px;top:704px;width:134px;height:21px;background:#e1e1e1;border:1px solid #adadad'></div>
<div class='t' style='left:893px;width:134px;text-align:center;top:708px;font-size:11px;color:#111'>Zmień lokalizację w ewid.</div>
<div class='a' style='left:1207px;top:704px;width:118px;height:21px;background:#e1e1e1;border:1px solid #adadad'></div>
<div class='t' style='left:1207px;width:118px;text-align:center;top:708px;font-size:11px;color:#111'>Ręcznie</div>
<div class='a' style='left:1105px;top:761px;width:118px;height:21px;background:#e1e1e1;border:1px solid #adadad'></div>
<div class='t' style='left:1105px;width:118px;text-align:center;top:765px;font-size:11px;color:#111'>Zakończ inwent.</div>
<div class='a' style='left:1231px;top:761px;width:118px;height:21px;background:#e1e1e1;border:1px solid #adadad'></div>
<div class='t' style='left:1231px;width:118px;text-align:center;top:765px;font-size:11px;color:#111'>Odłóż inwent.</div>
<svg class='a' style='left:1347px;top:779px' width='10' height='10'><g fill='#aaa'><rect x='6' y='0' width='2' height='2'/><rect x='3' y='3' width='2' height='2'/><rect x='6' y='3' width='2' height='2'/><rect x='0' y='6' width='2' height='2'/><rect x='3' y='6' width='2' height='2'/><rect x='6' y='6' width='2' height='2'/></g></svg>
</body></html>
